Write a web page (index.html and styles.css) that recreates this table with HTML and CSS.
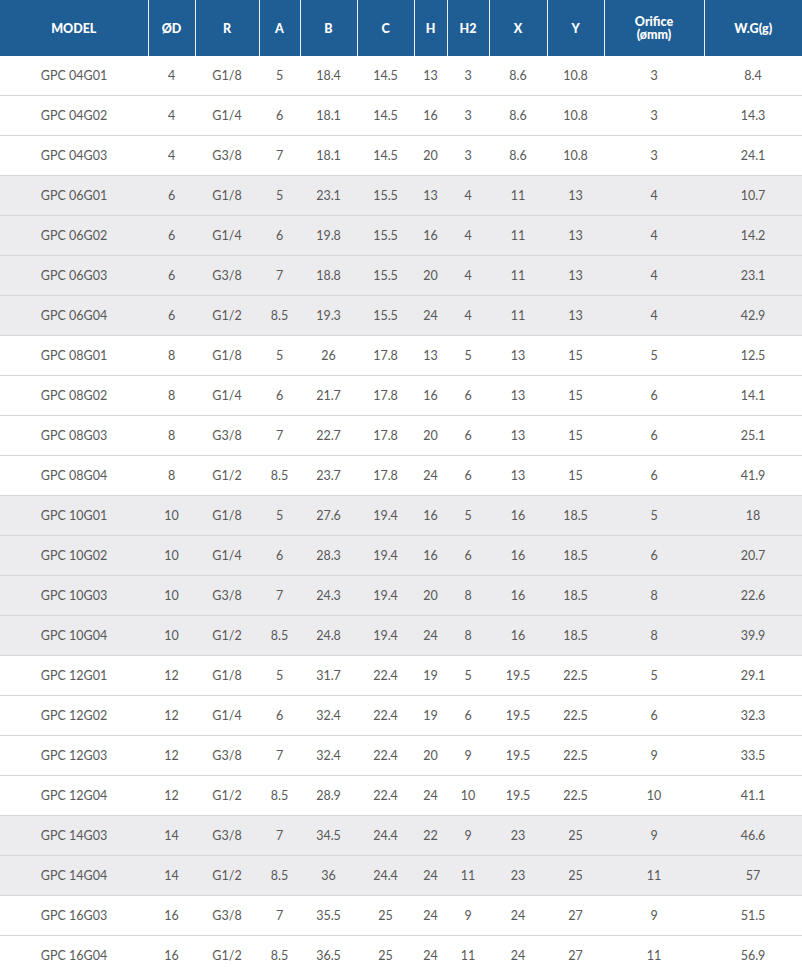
FILE: index.html
```html
<!DOCTYPE html>
<html>
<head>
<meta charset="utf-8">
<link rel="stylesheet" href="styles.css">
</head>
<body>
<table class="spec">
<colgroup>
<col class="c-model"><col class="c-d"><col class="c-r"><col class="c-a"><col class="c-b"><col class="c-c"><col class="c-h"><col class="c-h2"><col class="c-x"><col class="c-y"><col class="c-or"><col class="c-wg">
</colgroup>
<thead>
<tr><th>MODEL</th><th>ØD</th><th>R</th><th>A</th><th>B</th><th>C</th><th>H</th><th>H2</th><th>X</th><th>Y</th><th class="two"><span class="ln">Orifice</span><span class="ln">(ømm)</span></th><th>W.G(g)</th></tr>
</thead>
<tbody>
<tr class="w"><td>GPC 04G01</td><td>4</td><td>G1/8</td><td>5</td><td>18.4</td><td>14.5</td><td>13</td><td>3</td><td>8.6</td><td>10.8</td><td>3</td><td>8.4</td></tr>
<tr class="w"><td>GPC 04G02</td><td>4</td><td>G1/4</td><td>6</td><td>18.1</td><td>14.5</td><td>16</td><td>3</td><td>8.6</td><td>10.8</td><td>3</td><td>14.3</td></tr>
<tr class="w"><td>GPC 04G03</td><td>4</td><td>G3/8</td><td>7</td><td>18.1</td><td>14.5</td><td>20</td><td>3</td><td>8.6</td><td>10.8</td><td>3</td><td>24.1</td></tr>
<tr class="g"><td>GPC 06G01</td><td>6</td><td>G1/8</td><td>5</td><td>23.1</td><td>15.5</td><td>13</td><td>4</td><td>11</td><td>13</td><td>4</td><td>10.7</td></tr>
<tr class="g"><td>GPC 06G02</td><td>6</td><td>G1/4</td><td>6</td><td>19.8</td><td>15.5</td><td>16</td><td>4</td><td>11</td><td>13</td><td>4</td><td>14.2</td></tr>
<tr class="g"><td>GPC 06G03</td><td>6</td><td>G3/8</td><td>7</td><td>18.8</td><td>15.5</td><td>20</td><td>4</td><td>11</td><td>13</td><td>4</td><td>23.1</td></tr>
<tr class="g"><td>GPC 06G04</td><td>6</td><td>G1/2</td><td>8.5</td><td>19.3</td><td>15.5</td><td>24</td><td>4</td><td>11</td><td>13</td><td>4</td><td>42.9</td></tr>
<tr class="w"><td>GPC 08G01</td><td>8</td><td>G1/8</td><td>5</td><td>26</td><td>17.8</td><td>13</td><td>5</td><td>13</td><td>15</td><td>5</td><td>12.5</td></tr>
<tr class="w"><td>GPC 08G02</td><td>8</td><td>G1/4</td><td>6</td><td>21.7</td><td>17.8</td><td>16</td><td>6</td><td>13</td><td>15</td><td>6</td><td>14.1</td></tr>
<tr class="w"><td>GPC 08G03</td><td>8</td><td>G3/8</td><td>7</td><td>22.7</td><td>17.8</td><td>20</td><td>6</td><td>13</td><td>15</td><td>6</td><td>25.1</td></tr>
<tr class="w"><td>GPC 08G04</td><td>8</td><td>G1/2</td><td>8.5</td><td>23.7</td><td>17.8</td><td>24</td><td>6</td><td>13</td><td>15</td><td>6</td><td>41.9</td></tr>
<tr class="g"><td>GPC 10G01</td><td>10</td><td>G1/8</td><td>5</td><td>27.6</td><td>19.4</td><td>16</td><td>5</td><td>16</td><td>18.5</td><td>5</td><td>18</td></tr>
<tr class="g"><td>GPC 10G02</td><td>10</td><td>G1/4</td><td>6</td><td>28.3</td><td>19.4</td><td>16</td><td>6</td><td>16</td><td>18.5</td><td>6</td><td>20.7</td></tr>
<tr class="g"><td>GPC 10G03</td><td>10</td><td>G3/8</td><td>7</td><td>24.3</td><td>19.4</td><td>20</td><td>8</td><td>16</td><td>18.5</td><td>8</td><td>22.6</td></tr>
<tr class="g"><td>GPC 10G04</td><td>10</td><td>G1/2</td><td>8.5</td><td>24.8</td><td>19.4</td><td>24</td><td>8</td><td>16</td><td>18.5</td><td>8</td><td>39.9</td></tr>
<tr class="w"><td>GPC 12G01</td><td>12</td><td>G1/8</td><td>5</td><td>31.7</td><td>22.4</td><td>19</td><td>5</td><td>19.5</td><td>22.5</td><td>5</td><td>29.1</td></tr>
<tr class="w"><td>GPC 12G02</td><td>12</td><td>G1/4</td><td>6</td><td>32.4</td><td>22.4</td><td>19</td><td>6</td><td>19.5</td><td>22.5</td><td>6</td><td>32.3</td></tr>
<tr class="w"><td>GPC 12G03</td><td>12</td><td>G3/8</td><td>7</td><td>32.4</td><td>22.4</td><td>20</td><td>9</td><td>19.5</td><td>22.5</td><td>9</td><td>33.5</td></tr>
<tr class="w"><td>GPC 12G04</td><td>12</td><td>G1/2</td><td>8.5</td><td>28.9</td><td>22.4</td><td>24</td><td>10</td><td>19.5</td><td>22.5</td><td>10</td><td>41.1</td></tr>
<tr class="g"><td>GPC 14G03</td><td>14</td><td>G3/8</td><td>7</td><td>34.5</td><td>24.4</td><td>22</td><td>9</td><td>23</td><td>25</td><td>9</td><td>46.6</td></tr>
<tr class="g"><td>GPC 14G04</td><td>14</td><td>G1/2</td><td>8.5</td><td>36</td><td>24.4</td><td>24</td><td>11</td><td>23</td><td>25</td><td>11</td><td>57</td></tr>
<tr class="w"><td>GPC 16G03</td><td>16</td><td>G3/8</td><td>7</td><td>35.5</td><td>25</td><td>24</td><td>9</td><td>24</td><td>27</td><td>9</td><td>51.5</td></tr>
<tr class="w"><td>GPC 16G04</td><td>16</td><td>G1/2</td><td>8.5</td><td>36.5</td><td>25</td><td>24</td><td>11</td><td>24</td><td>27</td><td>11</td><td>56.9</td></tr>
</tbody>
</table>
</body>
</html>
```
FILE: styles.css
```css
html, body {
  margin: 0;
  padding: 0;
  background: #ffffff;
}
.spec {
  width: 802px;
  table-layout: fixed;
  border-collapse: collapse;
  font-family: Lato, "Noto Sans", sans-serif;
  font-size: 12.5px;
  color: #585858;
}
.c-model { width: 148px; }
.c-d { width: 47px; }
.c-r { width: 64px; }
.c-a { width: 41px; }
.c-b { width: 57px; }
.c-c { width: 57px; }
.c-h { width: 33px; }
.c-h2 { width: 42px; }
.c-x { width: 58px; }
.c-y { width: 57px; }
.c-or { width: 100px; }
.c-wg { width: 98px; }
.spec th {
  height: 56px;
  padding: 0;
  background: #1f5e95;
  color: #ffffff;
  font-weight: 900;
  font-size: 12.5px;
  text-align: center;
  vertical-align: middle;
  border-left: 1px solid #e8eef5;
  line-height: 15px;
}
.spec th:first-child { border-left: none; }
.spec th .ln {
  display: block;
  line-height: 13px;
}
.spec td {
  height: 39px;
  padding: 0;
  text-align: center;
  vertical-align: middle;
  border-top: 1px solid #d6d6d6;
}
.spec tbody tr:first-child td { border-top: none; }
.spec tr.g td { background: #ececee; }
.spec tr.w td { background: #ffffff; }
```
